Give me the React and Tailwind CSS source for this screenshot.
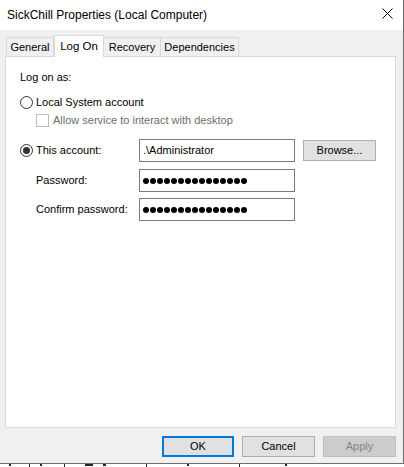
import React from "react";

const F = { fontFamily: '"Liberation Sans", Arial, sans-serif' };

function Dots() {
  return (
    <div className="flex items-center gap-[1px] pl-[3px]">
      {Array.from({ length: 15 }).map((_, i) => (
        <div key={i} className="w-[6px] h-[6px] rounded-full bg-black" />
      ))}
    </div>
  );
}

function Radio({ checked }) {
  return (
    <div className="w-[13px] h-[13px] rounded-full border border-[#333333] bg-white flex items-center justify-center shrink-0">
      {checked && <div className="w-[7px] h-[7px] rounded-full bg-[#333333]" />}
    </div>
  );
}

export default function App() {
  return (
    <div className="w-[404px] h-[467px] bg-white overflow-hidden text-[11px] text-black" style={F}>
      <div className="w-[404px] h-[464px] bg-[#f0f0f0] border-r border-b border-[#6e6e6e] flex flex-col">
        {/* title bar */}
        <div className="h-[30px] bg-white flex items-center justify-between pl-[7px] pr-[9px] pb-[1px] shrink-0">
          <span className="text-[12px] text-black">SickChill Properties (Local Computer)</span>
          <svg width="11" height="11" viewBox="0 0 11 11" className="mr-[1px] mb-[2px]">
            <path d="M0.5 0.5 L10.5 10.5 M10.5 0.5 L0.5 10.5" stroke="#000" strokeWidth="1" />
          </svg>
        </div>
        {/* tabs */}
        <div className="pl-[6px] pt-[5px] flex items-end h-[26px] shrink-0">
          <div className="w-[48px] h-[19px] border border-b-0 border-[#d9d9d9] bg-[#f0f0f0] flex items-center justify-center pt-[1px]">General</div>
          <div className="w-[50px] border border-b-0 border-[#d9d9d9] bg-white flex items-start justify-center pt-[2px] relative z-10 -mb-[1px] h-[22px] text-[11.5px]">Log On</div>
          <div className="w-[57px] h-[19px] border border-b-0 border-l-0 border-[#d9d9d9] bg-[#f0f0f0] flex items-center justify-center pt-[1px]">Recovery</div>
          <div className="w-[78px] h-[19px] border border-b-0 border-l-0 border-[#d9d9d9] bg-[#f0f0f0] flex items-center justify-center pt-[1px]">Dependencies</div>
        </div>
        {/* panel */}
        <div className="ml-[5px] w-[391px] h-[372px] bg-white border border-[#d9d9d9] shrink-0 relative">
          <div className="pl-[14px] pt-[14px]">
            <div className="h-[13px] leading-[13px]">Log on as:</div>
            <div className="flex items-center gap-[3px] mt-[12px] h-[13px]">
              <Radio />
              <span>Local System account</span>
            </div>
            <div className="flex items-center gap-[4px] mt-[5px] ml-[16px] h-[13px]">
              <div className="w-[13px] h-[13px] border border-[#bcbcbc] bg-white shrink-0" />
              <span className="text-[#6d6d6d]">Allow service to interact with desktop</span>
            </div>
            <div className="flex items-center mt-[12px] h-[23px]">
              <div className="flex items-center gap-[3px] w-[119px]">
                <Radio checked />
                <span>This account:</span>
              </div>
              <div className="w-[156px] h-[23px] border border-[#7a7a7a] bg-white flex items-center pl-[3px]">.\Administrator</div>
              <div className="ml-[8px] w-[73px] h-[21px] border border-[#adadad] bg-[#e1e1e1] flex items-center justify-center">Browse...</div>
            </div>
            <div className="flex items-center mt-[7px] h-[23px]">
              <span className="w-[119px] pl-[16px]">Password:</span>
              <div className="w-[156px] h-[23px] border border-[#7a7a7a] bg-white flex items-center"><Dots /></div>
            </div>
            <div className="flex items-center mt-[6px] h-[23px]">
              <span className="w-[119px] pl-[16px]">Confirm password:</span>
              <div className="w-[156px] h-[23px] border border-[#7a7a7a] bg-white flex items-center"><Dots /></div>
            </div>
          </div>
        </div>
        {/* buttons */}
        <div className="flex justify-end gap-[8px] pr-[7px] mt-[8px]">
          <div className="w-[72px] h-[21px] border-2 border-[#0078d7] bg-[#e1e1e1] flex items-center justify-center">OK</div>
          <div className="w-[73px] h-[21px] border border-[#adadad] bg-[#e1e1e1] flex items-center justify-center">Cancel</div>
          <div className="w-[73px] h-[21px] border border-[#bfbfbf] bg-[#cccccc] text-[#838383] flex items-center justify-center">Apply</div>
        </div>
      </div>
      <div className="h-[3px] flex items-start gap-[10px] pl-[9px]">
        <div className="w-[2px] h-[2px] bg-[#222222]" />
        <div className="w-[1px] h-[3px] bg-[#222222] ml-[8px]" />
        <div className="w-[2px] h-[2px] bg-[#222222]" />
        <div className="w-[1px] h-[3px] bg-[#222222] ml-[12px]" />
        <div className="w-[8px] h-[2px] bg-[#222222] ml-[10px]" />
        <div className="w-[3px] h-[2px] bg-[#222222]" />
        <div className="w-[1px] h-[3px] bg-[#222222] ml-[30px]" />
        <div className="w-[2px] h-[2px] bg-[#222222] ml-[30px]" />
        <div className="w-[1px] h-[3px] bg-[#222222] ml-[40px]" />
        <div className="w-[2px] h-[2px] bg-[#222222] ml-[35px]" />
      </div>
    </div>
  );
}
